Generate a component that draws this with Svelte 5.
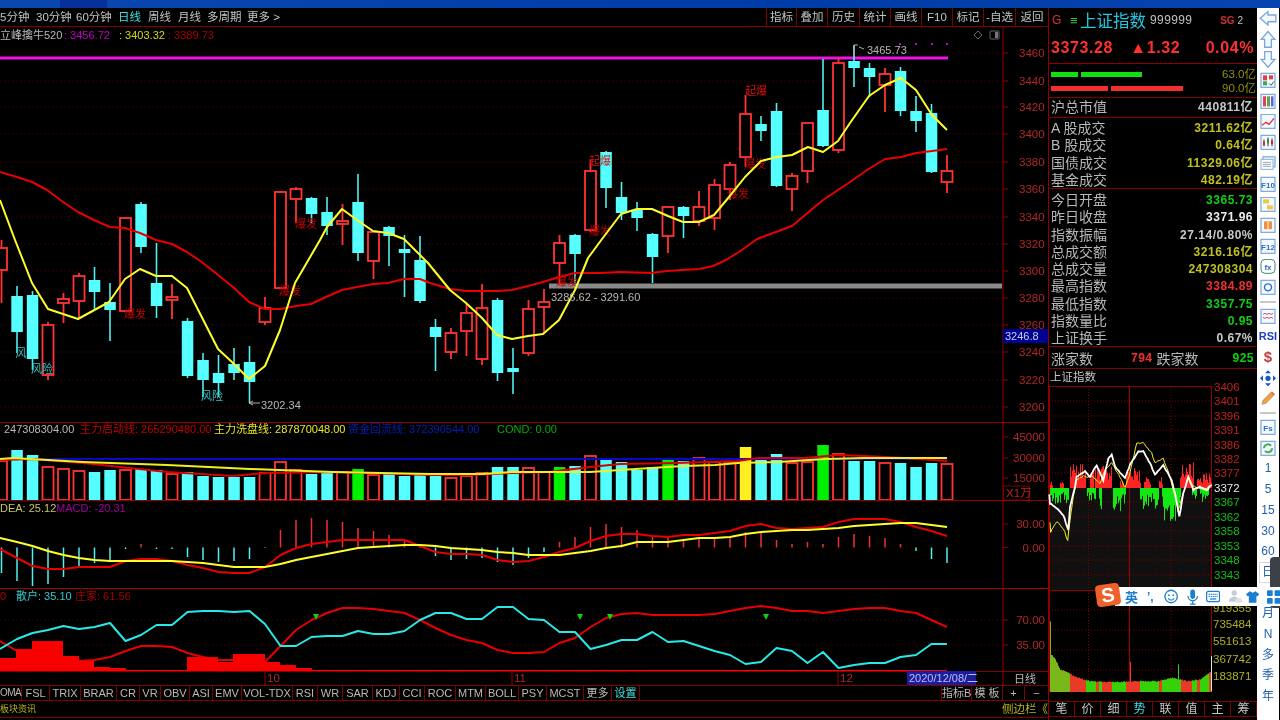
<script>
  // candles: [type, high, body top, body bottom, low] in page px, left to right
  const candles = [
    ['r',240,248,270,303],['c',286,296,332,353],['c',291,295,359,370],['r',322,325,375,380],['r',293,299,303,323],
    ['r',273,276,301,318],['c',267,280,292,310],['c',283,302,310,341],['r',217,218,311,312],['c',202,204,247,253],
    ['c',243,283,306,318],['r',284,297,300,319],['c',318,321,376,378],['c',353,360,380,397],['c',355,373,383,397],
    ['c',348,364,373,380],['c',346,362,382,403],['r',297,308,322,325],['r',191,192,288,289],['r',187,189,199,223],
    ['c',197,198,214,223],['c',197,212,226,235],['r',204,221,224,245],['c',174,202,253,261],['r',231,232,261,279],
    ['c',226,227,236,266],['c',235,249,253,297],['c',236,260,301,303],['c',319,327,337,371],['r',328,333,352,359],
    ['r',303,313,331,356],['r',284,308,359,365],['c',298,300,373,381],['c',348,368,372,394],['r',300,309,353,356],
    ['r',289,302,307,333],['r',235,243,263,285],['c',234,235,254,283],['r',160,171,230,232],['c',151,152,188,208],
    ['c',182,197,213,220],['c',202,210,218,231],['c',233,234,257,283],['r',206,207,236,253],['c',206,207,216,238],
    ['r',191,207,221,226],['r',179,185,218,230],['r',162,165,189,200],['r',95,114,157,167],['c',116,124,131,141],
    ['c',103,111,186,187],['r',173,176,189,211],['r',123,123,171,183],['c',59,110,146,147],['r',57,63,150,153],
    ['c',45,61,68,87],['c',63,68,77,97],['r',68,74,85,112],['c',67,71,111,116],['c',96,111,121,132],
    ['c',104,113,172,173],['r',155,171,182,193]
  ];
  const cx = i => 1.5 + 15.5 * i;
  const pts = a => a.map(p => p.join(',')).join(' ');
  const line = a => pts(a.map((y, i) => [i === 0 ? 0 : cx(i), y]));

  const yellowK = [[0,200],[15,240],[32,283],[48,309],[78,319],[109,302],[125,279],[140,269],[156,276],[172,276],[187,288],[218,349],[233,363],[249,379],[265,366],[280,330],[295,283],[320,240],[327,227],[342,209],[357,220],[373,231],[388,233],[404,239],[428,263],[450,290],[466,303],[482,318],[497,335],[512,339],[528,336],[543,334],[559,320],[575,290],[588,258],[602,239],[621,214],[637,209],[652,209],[668,216],[683,222],[699,222],[714,215],[729,197],[745,177],[761,161],[777,157],[792,155],[808,147],[823,152],[838,141],[850,123],[869,96],[885,85],[901,78],[916,90],[932,115],[947,130]];
  const redK = [[0,172],[17,177],[32,182],[47,190],[63,202],[78,212],[94,220],[110,227],[125,228],[140,233],[156,240],[172,244],[187,252],[203,263],[218,275],[233,287],[249,302],[265,309],[280,309],[296,306],[311,304],[326,297],[342,290],[357,287],[373,284],[388,283],[404,279],[420,279],[430,283],[450,289],[466,291],[497,291],[512,290],[528,286],[543,282],[559,277],[575,273],[601,273],[620,272],[651,273],[667,271],[699,269],[713,266],[726,260],[742,250],[757,239],[792,226],[823,200],[850,182],[867,170],[885,159],[901,157],[916,153],[932,151],[947,149]];

  const kTicks = [[3460,53],[3440,81],[3420,107],[3400,134],[3380,162],[3360,189],[3340,217],[3320,244],[3300,271],[3280,298],[3260,325],[3240,352],[3220,380],[3200,407]];
  const kTags = [
    ['爆发',306,224,'#c80000'],['爆发',135,314,'#c80000'],['爆发',290,291,'#c80000'],['爆发',600,231,'#c80000'],
    ['爆发',755,164,'#c80000'],['爆发',738,194,'#c80000'],['爆发',567,282,'#c80000'],['起爆',600,161,'#d81010'],
    ['起爆',756,91,'#d81010'],['风',21,353,'#30c8c8'],['风险',42,369,'#30c8c8'],['风险',212,396,'#30c8c8']
  ];

  // volume: fill type, top of bar. base is y=500
  const volTops = [461,450,455,467,469,471,472,470,470,469,470,474,472,476,477,477,477,473,462,470,474,473,472,469,475,473,476,475,476,478,476,473,467,467,468,472,467,466,456,460,462,470,467,459,461,458,462,462,447,458,454,463,462,445,454,461,461,463,463,467,463,464];
  const volTypes = 'rccrrrccrccrcccccrrrccrgrccccrrrccrrgcrccccgcrrryccrrgrccrcccr'.split('');
  const volY = [[0,459],[13,458],[83,462],[167,465],[250,469],[333,472],[430,474],[482,474],[512,472],[590,472],[651,468],[683,466],[715,465],[738,463],[778,462],[825,459],[865,458],[947,458]];
  const volR = [[0,460],[33,459],[83,463],[167,472],[233,476],[267,473],[333,472],[430,475],[469,475],[513,473],[549,472],[590,467],[620,464],[675,463],[707,462],[738,461],[758,458],[805,458],[838,455],[865,456],[904,458],[947,461]];

  // macd, one value per candle
  const macdBars = [573,581,586,584,577,568,563,560,549,544,549,549,557,560,562,561,559,548,530,520,518,520,522,528,531,535,539,548,556,560,559,558,562,565,558,552,542,537,527,524,527,530,537,536,539,537,537,537,532,533,540,544,542,544,537,534,536,538,544,551,559,563];
  const macdRed = [549,558,566,569,569,567,567,567,561,559,559,561,565,568,572,573,573,567,555,548,544,542,540,540,540,540,540,546,552,554,554,555,560,562,561,557,552,548,541,536,534,534,536,537,535,535,533,531,526,524,528,529,528,527,522,519,519,519,522,527,531,536];
  const macdYel = [538,542,546,551,555,558,560,561,561,561,561,561,562,563,565,567,567,567,564,560,557,554,551,548,547,546,545,545,546,548,549,550,552,553,555,555,555,553,551,548,546,542,542,542,540,538,538,537,534,532,531,530,530,529,528,526,525,524,523,523,525,527];

  // lower indicator
  const kdjCyan = [649,639,633,630,626,629,627,623,641,635,625,625,612,611,611,612,611,624,646,646,637,636,636,631,634,634,631,620,613,613,619,619,607,607,619,620,632,632,649,645,640,640,632,642,641,646,651,655,664,662,648,651,663,652,668,665,663,663,657,655,644,644];
  const kdjRed = [641,651,655,658,660,661,660,657,651,646,646,647,653,657,660,660,661,662,646,630,620,613,608,608,609,611,613,620,628,635,640,643,650,653,653,652,643,638,627,618,614,613,615,615,615,615,614,611,608,606,608,611,611,613,611,609,608,608,611,613,620,627];
  const kdjFill = [[0,658],[16,658],[16,649],[32,649],[32,641],[63,641],[63,656],[79,656],[79,661],[94,661],[94,667],[110,667],[110,668],[126,668],[126,670],[187,670],[187,657],[218,657],[218,662],[233,662],[233,654],[265,654],[265,662],[280,662],[280,665],[296,665],[296,668],[312,668],[312,670],[947,670],[947,671],[0,671]];
  const marks = [316,580,610,766];

  const tabsL = [['5分钟',36],['30分钟',40],['60分钟',42],['日线',30,'on'],['周线',30],['月线',29],['多周期',40],['更多 >',40]];
  const tabsR = [['指标',30],['叠加',31],['历史',32],['统计',31],['画线',31],['F10',31],['标记',31],['-自选',32],['返回',33]];
  const indicators = [['OMA',22],['FSL',28],['TRIX',31],['BRAR',36],['CR',23],['VR',21],['OBV',29],['ASI',23],['EMV',29],['VOL-TDX',51],['RSI',25],['WR',25],['SAR',30],['KDJ',27],['CCI',25],['ROC',31],['MTM',30],['BOLL',33],['PSY',28],['MCST',37],['更多',28],['设置',28,'on']];
  const sells = [['A 股成交','3211.62亿'],['B 股成交','0.64亿'],['国债成交','11329.06亿'],['基金成交','482.19亿']];
  const stats = [
    ['今日开盘','3365.73','green'],['昨日收盘','3371.96','white'],['指数振幅','27.14/0.80%','grey'],
    ['总成交额','3216.16亿','olive'],['总成交量','247308304','olive'],['最高指数','3384.89','red'],
    ['最低指数','3357.75','green'],['指数量比','0.95','green'],['上证换手','0.67%','grey']
  ];
  const quoteTabs = ['笔','价','细','势','联','值','主','筹'];

  // intraday mini chart, points read off the picture in 3x coordinates
  const mp = a => a.map(([x, y]) => [1040 + x / 3, 380 + y / 3]);
  const rnd = n => { const s = Math.sin(n * 12.9898) * 43758.5453; return s - Math.floor(s); };
  function wobble(a, amp) {
    const out = [];
    for (let k = 0; k < a.length - 1; k++) {
      const [x0, y0] = a[k], [x1, y1] = a[k + 1];
      const n = Math.max(1, Math.round((x1 - x0) / 1.3));
      for (let j = 0; j < n; j++) {
        const t = j / n;
        out.push([+(x0 + (x1 - x0) * t).toFixed(1), +(y0 + (y1 - y0) * t + (rnd(out.length) - 0.5) * amp).toFixed(1)]);
      }
    }
    out.push(a[a.length - 1]);
    return out;
  }
  const whiteLine = wobble(mp([[28,345],[30,370],[50,385],[70,405],[85,450],[90,380],[105,320],[110,290],[135,275],[150,290],[170,255],[190,300],[205,235],[215,225],[225,260],[255,295],[270,255],[295,215],[310,215],[330,250],[345,285],[370,255],[395,300],[405,340],[418,410],[430,340],[445,290],[460,330],[480,320],[500,330],[515,315]]), 1.2);
  const yellowLine = wobble(mp([[30,430],[32,455],[50,425],[70,445],[83,480],[90,420],[100,350],[110,300],[130,290],[160,290],[180,310],[195,270],[215,250],[240,290],[255,325],[270,280],[290,190],[310,190],[335,220],[345,250],[370,235],[390,290],[400,330],[415,390],[430,340],[445,290],[460,320],[480,325],[500,325],[515,315]]), 1.8);
  const inRange = (z, r) => r.some(([a, b]) => z >= a && z <= b);
  const greenZones = [[30,85],[140,165],[175,185],[218,255],[300,355],[365,420],[455,470],[480,505]];
  const redZones = [[30,36],[58,70],[88,135],[150,160],[165,215],[240,250],[258,300],[312,330],[355,368],[420,460],[470,515]];
  const greenDepth = z => z < 90 ? 16 : z < 170 ? 13 : z < 190 ? 27 : z < 260 ? 24 : z < 360 ? 21 : z < 425 ? 33 : 14;
  const redH = z => z < 85 ? 7 : z < 135 ? 25 : z < 215 ? 22 : z < 255 ? 8 : z < 300 ? 20 : z < 365 ? 11 : z < 420 ? 4 : z < 460 ? 26 : 15;
  const miniBars = [];
  const miniVols = [];
  const envelope = [[28,660],[33,825],[45,840],[60,870],[85,880],[100,890],[130,900],[150,905],[200,908],[300,905],[350,905],[400,895],[440,905],[480,900],[505,880],[515,878]];
  const volTop = z => {
    for (let k = 0; k < envelope.length - 1; k++) {
      const [a, b] = envelope[k], [c, d] = envelope[k + 1];
      if (z >= a && z <= c) return b + (d - b) * (z - a) / (c - a);
    }
    return 905;
  };
  for (let px = 1050; px < 1212; px++) {
    const z = (px - 1040) * 3;
    if (inRange(z, greenZones)) miniBars.push({ px, y: 488, h: greenDepth(z) * (0.25 + rnd(px) * 0.75), f: '#12e812' });
    if (inRange(z, redZones)) {
      const h = redH(z) * (0.3 + rnd(px + 9) * 0.7);
      miniBars.push({ px, y: 488 - h, h, f: '#ff2424' });
    }
    const spike = px === 1130 ? 20 : px === 1178 ? 15 : 0;
    const y = 380 + volTop(z) / 3 - spike - rnd(px + 3);
    const red = inRange(z, redZones) && !inRange(z, greenZones);
    miniVols.push({ px, y, h: 692 - y, f: z < 88 ? '#78b818' : red ? '#e83a28' : '#38d008' });
  }
  const miniHi = [[3406,387],[3401,401],[3396,416],[3391,430],[3386,445],[3382,459],[3377,473]];
  const miniLo = [[3367,502],[3362,517],[3358,531],[3353,546],[3348,560],[3343,575]];
  const miniVolLabels = [[919355,608],[735484,624],[551613,641],[367742,659],[183871,676]];
  const periods = ['1','5','15','30','60'];
  const periodsCn = ['周','月','N','多','季','年'];
</script>

<div class="screen">
  <div class="titlebar"><span class="title-dark"></span></div>
  <div class="body">
    <main class="charts">
      <div class="tabbar">
        <div class="tabs-left">
          {#each tabsL as t}<span class="tab-l" class:on={t[2]} style="width:{t[1]}px">{t[0]}</span>{/each}
        </div>
        <div class="tabs-right">
          {#each tabsR as t}<span class="tab-r" style="width:{t[1]}px">{t[0]}</span>{/each}
        </div>
      </div>

      <svg class="pane" width="1048" height="395" viewBox="0 27 1048 395">
        {#each kTicks as t}
          <line x1="0" x2="1003" y1={t[1]} y2={t[1]} class="grid" />
          <line x1="1003" x2="1008" y1={t[1]} y2={t[1]} class="tick" />
          <text x="1019" y={t[1] + 4} class="axis">{t[0]}</text>
        {/each}
        <line x1="1003" x2="1003" y1="27" y2="422" class="tick" />
        <text x="0" y="39" class="lg grey">立峰擒牛520</text>
        <text x="64" y="39" class="lg" fill="#c000c0">: 3456.72</text>
        <text x="119" y="39" class="lg" fill="#d8d800">: 3403.32</text>
        <text x="168" y="39" class="lg" fill="#a80000">: 3389.73</text>
        <path d="M978 31l4 4-4 4-4-4z" class="hollow" />
        <rect x="990" y="31" width="9" height="8" rx="1" class="hollow" />
        <rect x="995" y="32" width="3" height="6" fill="#777" />
        {#each [900,916,932,947] as x}<rect x={x - 1} y="43" width="2" height="2" fill="#d000d0" />{/each}

        <rect x="0" y="56.5" width="948" height="3" fill="#f010e8" />
        <rect x="549" y="283.5" width="453" height="5" fill="#8a8a8a" />

        {#each candles as c, i}
          {#if c[0] === 'c'}
            <line x1={cx(i)} x2={cx(i)} y1={c[1]} y2={c[4]} stroke="#50f0f0" stroke-width="1.6" />
            <rect x={cx(i) - 5.7} y={c[2]} width="11.5" height={c[3] - c[2]} fill="#55ffff" />
          {:else}
            <line x1={cx(i)} x2={cx(i)} y1={c[1]} y2={c[2]} stroke="#ff3434" stroke-width="1.8" />
            <line x1={cx(i)} x2={cx(i)} y1={c[3]} y2={c[4]} stroke="#ff3434" stroke-width="1.8" />
            <rect x={cx(i) - 5.5} y={c[2]} width="11" height={c[3] - c[2]} fill="#000" stroke="#ff3434" stroke-width="1.8" />
          {/if}
        {/each}

        {#each kTags as t}<text x={t[1]} y={t[2] + 4} class="tag" fill={t[3]}>{t[0]}</text>{/each}
        <polyline points={pts(redK)} class="ln" stroke="#e80000" />
        <polyline points={pts(yellowK)} class="ln" stroke="#ffff28" />

        <path d="M854 45v12M854 45h4M859 47l5 2" class="mark" />
        <text x="867" y="54" class="lg grey">3465.73</text>
        <path d="M249 403h11M249 403l4-2M249 403l4 2" class="mark" />
        <text x="261" y="409" class="lg grey">3202.34</text>
        <text x="551" y="301" class="lg grey">3286.62 - 3291.60</text>
        <rect x="1003" y="329" width="45" height="14" fill="#000090" />
        <text x="1005" y="340" class="lg" fill="#c8d0f0">3246.8</text>
      </svg>

      <svg class="pane" width="1048" height="78" viewBox="0 422 1048 78">
        <line x1="0" x2="1048" y1="422.5" y2="422.5" class="tick" />
        <text x="4" y="433" class="lg grey">247308304.00</text>
        <text x="80" y="433" class="lg" fill="#c00000">主力启动线: 265290480.00</text>
        <text x="214" y="433" class="lg" fill="#e8e820">主力洗盘线: 287870048.00</text>
        <text x="348" y="433" class="lg" fill="#0020b0">资金回流线: 372390544.00</text>
        <text x="497" y="433" class="lg" fill="#00b000">COND: 0.00</text>
        <line x1="1003" x2="1003" y1="422" y2="500" class="tick" />
        {#each [[45000,437],[30000,458],[15000,478]] as t}
          <line x1="1003" x2="1008" y1={t[1]} y2={t[1]} class="tick" />
          <text x="1013" y={t[1] + 4} class="axis">{t[0]}</text>
        {/each}
        <rect x="1003.5" y="486" width="26" height="14" class="unitbox" />
        <text x="1006" y="497" class="axis">X1万</text>
        {#each volTops as top, i}
          {#if volTypes[i] === 'r'}
            <rect x={cx(i) - 5.5} y={top} width="11" height={500 - top} fill="#000" stroke="#ff3434" stroke-width="1.8" />
          {:else}
            <rect x={cx(i) - 5.7} y={top} width="11.5" height={500 - top} fill={volTypes[i] === 'c' ? '#55ffff' : volTypes[i] === 'g' ? '#00f000' : '#ffee20'} />
          {/if}
        {/each}
        <line x1="0" x2="947" y1="459" y2="459" stroke="#0808c8" stroke-width="2" />
        <polyline points={pts(volR)} class="ln" stroke="#d80000" />
        <polyline points={pts(volY)} class="ln" stroke="#f0f020" />
      </svg>

      <svg class="pane" width="1048" height="88" viewBox="0 500 1048 88">
        <line x1="0" x2="1048" y1="500.5" y2="500.5" class="tick" />
        <text x="0" y="512" class="lg" fill="#c8c860">DEA: 25.12</text>
        <text x="56" y="512" class="lg" fill="#a000a0">MACD: -20.31</text>
        <line x1="1003" x2="1003" y1="500" y2="588" class="tick" />
        {#each [['30.00',524],['0.00',547.5]] as t}
          <line x1="1003" x2="1008" y1={t[1]} y2={t[1]} class="tick" />
          <text x="1045" y={t[1] + 4} class="axis end">{t[0]}</text>
        {/each}
        {#each macdBars as y, i}
          <line x1={cx(i)} x2={cx(i)} y1="547.5" y2={y} stroke={y > 547.5 ? '#50f0f0' : '#f03030'} stroke-width="1.5" />
        {/each}
        <polyline points={line(macdRed)} class="ln" stroke="#e80000" />
        <polyline points={line(macdYel)} class="ln" stroke="#ffff28" />
      </svg>

      <svg class="pane" width="1048" height="83" viewBox="0 588 1048 83">
        <line x1="0" x2="1048" y1="588.5" y2="588.5" stroke="#a00000" />
        <text x="0" y="600" class="lg" fill="#b80000">0</text>
        <text x="16" y="600" class="lg" fill="#30c8d0">散户: 35.10</text>
        <text x="75" y="600" class="lg" fill="#a00000">庄家: 61.56</text>
        <line x1="0" x2="1003" y1="620" y2="620" class="grid" />
        <line x1="0" x2="1003" y1="645" y2="645" class="grid" />
        <line x1="1003" x2="1003" y1="588" y2="671" class="tick" />
        {#each [['70.00',620],['35.00',645]] as t}
          <line x1="1003" x2="1008" y1={t[1]} y2={t[1]} class="tick" />
          <text x="1045" y={t[1] + 4} class="axis end">{t[0]}</text>
        {/each}
        <polyline points={line(kdjRed)} class="ln" stroke="#e80000" />
        <polygon points={pts(kdjFill)} fill="#f80000" />
        <polyline points={line(kdjCyan)} class="ln" stroke="#28e8e8" />
        {#each marks as x}<path d="M{x - 3} 614h6l-3 6z" fill="#10d010" />{/each}
      </svg>

      <svg class="pane" width="1048" height="14" viewBox="0 671 1048 14">
        <line x1="0" x2="1048" y1="671" y2="671" stroke="#b00000" stroke-width="1.5" />
        {#each [[265,'10'],[512,'11'],[838,'12']] as d}
          <line x1={d[0]} x2={d[0]} y1="671" y2="685" class="tick" />
          <text x={d[0] + 2} y="682" class="axis">{d[1]}</text>
        {/each}
        <rect x="907" y="671" width="69" height="14" fill="#1c1c9c" />
        <text x="909" y="682" class="lg" fill="#b8c0f8">2020/12/08/二</text>
        <line x1="1003" x2="1003" y1="671" y2="685" class="tick" />
        <text x="1014" y="683" class="cn11">日线</text>
      </svg>

      <div class="indbar">
        <div class="ind-left">
          {#each indicators as t}<span class="ind" class:on={t[2]} style="width:{t[1]}px">{t[0]}</span>{/each}
        </div>
        <div class="ind-right">
          <span class="ind" style="width:31px">指标B</span>
          <span class="ind" style="width:31px">模 板</span>
          <span class="ind" style="width:22px">+</span>
          <span class="ind last" style="width:23px">−</span>
        </div>
      </div>

      <div class="newsbar">
        <span class="news-first">板块资讯</span>
        <span>侧边栏《</span>
      </div>
    </main>

    <aside class="quote">
      <div class="q-head">
        <span class="q-g">G</span>
        <span class="q-menu">≡</span>
        <span class="q-name">上证指数</span>
        <span class="q-code">999999</span>
        <span class="q-sg"><b>SG</b> 2</span>
      </div>
      <div class="q-price">
        <span>3373.28</span><span class="q-chg">▲1.32</span><span>0.04%</span>
      </div>
      <div class="q-flow">
        <div class="flow-row">
          <i class="fb g" style="width:27px"></i><i class="fb g" style="width:61px"></i>
          <span class="flow-num">63.0亿</span>
        </div>
        <div class="flow-row">
          <i class="fb r" style="width:57px"></i><i class="fb r" style="width:72px"></i>
          <span class="flow-num">90.0亿</span>
        </div>
      </div>
      <div class="q-block cap"><div class="q-row"><span>沪总市值</span><b class="grey">440811亿</b></div></div>
      <div class="q-block">
        {#each sells as s}<div class="q-row"><span>{s[0]}</span><b class="olive">{s[1]}</b></div>{/each}
      </div>
      <div class="q-block stats">
        {#each stats as s}<div class="q-row"><span>{s[0]}</span><b class={s[2]}>{s[1]}</b></div>{/each}
      </div>
      <div class="q-updown">
        <span class="cn14">涨家数</span><b class="red up-n">794</b><span class="cn14">跌家数</span><b class="green dn-n">925</b>
      </div>
      <div class="q-mini-title">上证指数</div>
      <svg class="pane mini-pane" width="207" height="315" viewBox="1049 386 207 315">
        <rect x="1049" y="488" width="163" height="102" fill="#101010" />
        {#each [401,416,430,445,459,473,502,517,531,546,560,575] as y}
          <line x1="1049" x2="1212" y1={y} y2={y} class="minigrid" />
        {/each}
        {#each [610,630,650,670] as y}<line x1="1049" x2="1212" y1={y} y2={y} class="minigrid" />{/each}
        <line x1="1088.5" x2="1088.5" y1="386" y2="691" class="minigrid" />
        <line x1="1171" x2="1171" y1="386" y2="691" class="minigrid" />
        <line x1="1129.5" x2="1129.5" y1="386" y2="691" stroke="#a00000" />
        <rect x="1049.5" y="386.5" width="162" height="305" fill="none" stroke="#900000" />
        <line x1="1049" x2="1256" y1="590.5" y2="590.5" stroke="#900000" />
        {#each miniBars as b}<rect x={b.px} y={b.y} width="1" height={b.h} fill={b.f} />{/each}
        {#each miniVols as b}<rect x={b.px} y={b.y} width="1" height={b.h} fill={b.f} />{/each}
        <rect x="1211" y="656" width="1" height="35" fill="#e0e0e0" />
        <polyline points={pts(yellowLine)} fill="none" stroke="#f0f020" stroke-width="1" />
        <polyline points={pts(whiteLine)} fill="none" stroke="#ffffff" stroke-width="1.8" />
        {#each miniHi as t}<text x="1214" y={t[1] + 4} class="mini" fill="#c02020">{t[0]}</text>{/each}
        <text x="1214" y="492" class="mini" fill="#e8e8e8">3372</text>
        {#each miniLo as t}<text x="1214" y={t[1] + 4} class="mini" fill="#10c010">{t[0]}</text>{/each}
        {#each miniVolLabels as t}<text x="1213" y={t[1] + 4} class="mini" fill="#b0b020">{t[0]}</text>{/each}
      </svg>
      <div class="q-tabs">
        {#each quoteTabs as t, i}<span class:on={i === 3}>{t}</span>{/each}
      </div>
    </aside>

    <nav class="tools">
      <svg class="ic big" viewBox="0 0 16 16"><path d="M1 8l7-6v3h7v6H8v3z" class="o" /></svg>
      <svg class="ic big" viewBox="0 0 16 16"><path d="M8 1l6 7h-3v7H5V8H2z" class="o" /></svg>
      <svg class="ic big" viewBox="0 0 16 16"><path d="M8 15L2 8h3V1h6v7h3z" class="o" /></svg>
      <svg class="ic" viewBox="0 0 16 16"><rect x="1" y="1" width="14" height="14" class="o" /><rect x="3" y="3" width="4" height="5" fill="#e04040" /><rect x="9" y="3" width="4" height="4" fill="#e04040" /><rect x="3" y="9" width="4" height="4" fill="#30b050" /><path d="M9 11l2 2 3-4" fill="none" stroke="#555" /></svg>
      <svg class="ic" viewBox="0 0 16 16"><rect x="1" y="1" width="14" height="14" class="o" /><rect x="3" y="3" width="3" height="10" fill="#e04050" /><rect x="7" y="3" width="3" height="10" fill="#60a050" /><rect x="11" y="3" width="2.5" height="10" fill="#6060d0" /></svg>
      <svg class="ic" viewBox="0 0 16 16"><rect x="1" y="1" width="14" height="14" class="o" /><path d="M2 12l4-3 3 2 5-6" fill="none" stroke="#e03030" stroke-width="1.3" /></svg>
      <svg class="ic" viewBox="0 0 16 16"><rect x="1" y="1" width="14" height="14" class="o" /><path d="M4 5v7M8 3v9M12 4v8" stroke="#444" /><rect x="3" y="7" width="2" height="4" fill="#e02020" /><rect x="7" y="5" width="2" height="4" fill="#209030" /><rect x="11" y="6" width="2" height="4" fill="#e02020" /></svg>
      <svg class="ic" viewBox="0 0 16 16"><rect x="3" y="1.500" width="12" height="10" class="o" /><rect x="1" y="4" width="12" height="10" fill="#fff" stroke="#8ab0d8" /><path d="M3 7h8M3 9h8M3 11h8" stroke="#9ab" /></svg>
      <svg class="ic" viewBox="0 0 16 16"><rect x="1" y="1" width="14" height="14" class="o" /><text x="8" y="12" class="ict">F10</text></svg>
      <svg class="ic" viewBox="0 0 16 16"><rect x="1" y="1" width="14" height="14" class="o" /><rect x="3" y="3" width="6" height="4" fill="#f0c840" /><rect x="7" y="9" width="6" height="4" fill="#f0c840" /></svg>
      <svg class="ic" viewBox="0 0 16 16"><rect x="1" y="1" width="14" height="14" class="o" /><rect x="4" y="4" width="8" height="8" rx="1" fill="#f09040" /><path d="M8 4v8" stroke="#fff" /></svg>
      <svg class="ic" viewBox="0 0 16 16"><rect x="1" y="1" width="14" height="14" class="o" /><text x="8" y="12" class="ict">F12</text></svg>
      <svg class="ic" viewBox="0 0 16 16"><rect x="1" y="1" width="14" height="14" rx="4" fill="none" stroke="#408878" /><text x="8" y="12" class="ict">fx</text></svg>
      <svg class="ic" viewBox="0 0 16 16"><rect x="1" y="1" width="14" height="14" class="o" /><circle cx="8" cy="8" r="3.500" fill="none" stroke="#3070c0" stroke-width="1.4" /></svg>
      <i class="tool-sep"></i>
      <svg class="ic" viewBox="0 0 16 16"><rect x="1" y="1" width="14" height="14" class="o" /><path d="M3 6l2-1 2 1 2-1 2 1 2-1M3 9l2 1 2-1 2 1 2-1 2 1" fill="none" stroke="#d05070" /></svg>
      <span class="tool-rsi">RSI</span>
      <span class="tool-dollar">$</span>
      <svg class="ic" viewBox="0 0 16 16"><path d="M8 0l3 3H5zM8 16l-3-3h6zM0 8l3-3v6zM16 8l-3 3V5z" fill="#1058d0" /><circle cx="8" cy="8" r="2.600" fill="#1058d0" /></svg>
      <svg class="ic" viewBox="0 0 16 16"><path d="M2 14l1-4 8-8 3 3-8 8z" fill="#f0a040" stroke="#a08060" stroke-width=".6" /><path d="M11 2l3 3 1-1-3-3z" fill="#e06060" /></svg>
      <i class="tool-sep"></i>
      <svg class="ic" viewBox="0 0 16 16"><rect x="1" y="1" width="14" height="14" class="o" /><text x="8" y="12" class="ict">Fs</text></svg>
      <svg class="ic" viewBox="0 0 16 16"><rect x="1" y="1" width="14" height="14" class="o" /><path d="M4 8a4 4 0 0 1 7-2.600M12 8a4 4 0 0 1-7 2.600" fill="none" stroke="#40b050" stroke-width="2" /></svg>
      {#each periods as p}<span class="tool-num">{p}</span>{/each}
      <span class="tool-num boxed">日</span>
      {#each periodsCn as p}<span class="tool-num">{p}</span>{/each}
    </nav>
  </div>

  <div class="handle"></div>
  <div class="ime">
    <span class="ime-logo">S</span>
    <span class="ime-en">英</span>
    <span class="ime-dot">’,</span>
    <svg width="15" height="15" viewBox="0 0 16 16"><circle cx="8" cy="8" r="7" fill="none" stroke="#1a7fd0" stroke-width="1.5" /><circle cx="5.5" cy="6.500" r="1" fill="#1a7fd0" /><circle cx="10.5" cy="6.500" r="1" fill="#1a7fd0" /><path d="M4.500 10a4 4 0 0 0 7 0" fill="none" stroke="#1a7fd0" stroke-width="1.3" /></svg>
    <svg width="12" height="16" viewBox="0 0 12 16"><rect x="3.500" y="0" width="5" height="10" rx="2.500" fill="#1a7fd0" /><path d="M1 7a5 5 0 0 0 10 0M6 12v3M3 15.500h6" fill="none" stroke="#1a7fd0" stroke-width="1.3" /></svg>
    <svg width="15" height="13" viewBox="0 0 16 13"><rect x=".7" y=".7" width="14.600" height="11.600" rx="2" fill="none" stroke="#1a7fd0" stroke-width="1.4" /><path d="M3 4h10M3 6.500h10" stroke="#1a7fd0" stroke-dasharray="1.4 .8" stroke-width="1.4" /><path d="M4.500 9.300h7" stroke="#1a7fd0" stroke-width="1.4" /></svg>
    <svg width="15" height="15" viewBox="0 0 16 16"><circle cx="7" cy="4" r="3" fill="#c4ccd4" /><path d="M1 14a6 6 0 0 1 12 0z" fill="#c4ccd4" /><rect x="8" y="10" width="8" height="5" rx="2.500" fill="#dde2e6" /></svg>
    <svg class="ime-shirt" width="14" height="14" viewBox="0 0 14 14"><path d="M4 1l3 1.500L10 1l4 3-2 2.500-1-.8V13H3V5.700l-1 .8L0 4z" fill="#1a7fd0" /></svg>
    <svg class="ime-grid" width="14" height="14" viewBox="0 0 14 14"><rect width="6" height="6" rx="1" fill="#1a7fd0" /><rect x="8" width="6" height="6" rx="1" fill="#1a7fd0" /><rect y="8" width="6" height="6" rx="1" fill="#1a7fd0" /><rect x="8" y="8" width="6" height="6" rx="1" fill="#1a7fd0" /></svg>
  </div>
</div>

<style>
  :global(body) {
    margin: 0;
    background: #000;
  }
  .screen {
    position: relative;
    width: 1280px;
    height: 720px;
    overflow: hidden;
    background: #000;
    font-family: "Liberation Sans", "Noto Sans CJK SC", sans-serif;
    color: #c4c4c4;
    filter: blur(0.5px);
  }
  .titlebar {
    height: 8px;
    padding-left: 60px;
    background: linear-gradient(90deg, #0a48b0, #003ca8 60%, #0844b0);
  }
  .title-dark {
    display: block;
    width: 47px;
    height: 8px;
    background: #08309a;
  }
  .body {
    display: flex;
    height: 712px;
  }
  .charts {
    width: 1048px;
    border-right: 1px solid #900000;
    flex: none;
  }
  .pane {
    display: block;
  }
  .mini-pane {
    overflow: visible;
  }
  .tabbar {
    display: flex;
    justify-content: space-between;
    height: 18px;
    border-bottom: 1px solid #800000;
    font-size: 11.5px;
  }
  .tabs-left, .tabs-right, .ind-left, .ind-right {
    display: flex;
  }
  .tab-l {
    line-height: 18px;
    white-space: nowrap;
  }
  .tab-l.on, .ind.on {
    color: #40e0e0;
  }
  .tab-r {
    line-height: 18px;
    text-align: center;
    border-left: 1px solid #800000;
    box-sizing: border-box;
  }
  .grid {
    stroke: #2c0000;
    stroke-dasharray: 2 2;
  }
  .minigrid {
    stroke: #800000;
    stroke-dasharray: 1 2;
  }
  .tick {
    stroke: #900000;
  }
  .axis {
    font-size: 11.5px;
    fill: #b02828;
  }
  .end {
    text-anchor: end;
  }
  .lg {
    font-size: 11px;
  }
  .grey {
    fill: #b8b8b8;
    color: #d0d0d0;
  }
  .tag {
    font-size: 11px;
    text-anchor: middle;
  }
  .ln {
    fill: none;
    stroke-width: 2;
    stroke-linejoin: round;
  }
  .hollow {
    fill: none;
    stroke: #666;
  }
  .mark {
    fill: none;
    stroke: #b0b0b0;
  }
  .unitbox {
    fill: none;
    stroke: #800000;
  }
  .cn11 {
    font-size: 11px;
    fill: #b8b8b8;
  }
  .mini {
    font-size: 11.5px;
  }
  .indbar {
    display: flex;
    justify-content: space-between;
    box-sizing: border-box;
    height: 16px;
    border-top: 1px solid #800000;
    border-bottom: 1px solid #800000;
    font-size: 11px;
  }
  .ind {
    line-height: 14px;
    text-align: center;
    border-right: 1px solid #800000;
    box-sizing: border-box;
    white-space: nowrap;
    color: #b8b8b8;
  }
  .ind.on {
    color: #40e0e0;
  }
  .ind.last {
    border-right: 0;
  }
  .ind-left .ind:first-child {
    font-size: 10px;
    letter-spacing: -0.5px;
  }
  .ind-right .ind:first-child {
    border-left: 1px solid #800000;
  }
  .ind-left {
    width: 640px;
  }
  .newsbar {
    display: flex;
    justify-content: space-between;
    height: 16px;
    line-height: 16px;
    font-size: 11.5px;
    color: #b8b820;
    border-bottom: 1px solid #800000;
  }
  .news-first {
    font-size: 9px;
  }
  .quote {
    width: 208px;
    flex: none;
    box-sizing: border-box;
  }
  .q-head {
    display: flex;
    align-items: center;
    height: 24px;
    padding-left: 3px;
    position: relative;
  }
  .q-g {
    color: #e03030;
    font-size: 12px;
    width: 16px;
  }
  .q-menu {
    color: #40c040;
    font-size: 13px;
    width: 10px;
    margin-left: 2px;
  }
  .q-name {
    color: #20c8e0;
    font-size: 16.5px;
    width: 70px;
  }
  .q-code {
    font-size: 12px;
    letter-spacing: 0.4px;
    color: #c0c0c0;
  }
  .q-sg {
    position: absolute;
    right: 14px;
    font-size: 10px;
  }
  .q-sg b {
    color: #d03030;
  }
  .q-price {
    display: flex;
    justify-content: space-between;
    height: 32px;
    padding: 0 3px 0 2px;
    line-height: 32px;
    font-size: 16px;
    font-weight: 700;
    letter-spacing: 0.6px;
    color: #ff3030;
    border-bottom: 1px solid #900000;
    box-sizing: border-box;
  }
  .q-chg {
    margin-left: -8px;
  }
  .q-flow {
    height: 34px;
    padding-top: 3px;
    box-sizing: border-box;
    border-bottom: 1px solid #800000;
  }
  .flow-row {
    position: relative;
    display: flex;
    gap: 3px;
    height: 14px;
    align-items: center;
    padding-left: 2px;
  }
  .fb {
    display: block;
    height: 5px;
  }
  .fb.g {
    background: #10e010;
  }
  .fb.r {
    background: #f03030;
  }
  .flow-num {
    position: absolute;
    right: 1px;
    top: 0;
    line-height: 14px;
    font-size: 11.5px;
    color: #909010;
  }
  .q-block {
    padding: 2px 3px 0 2px;
    height: 71px;
    box-sizing: border-box;
    border-bottom: 1px solid #800000;
  }
  .q-block.cap {
    height: 20px;
    padding-top: 1px;
  }
  .q-block.stats {
    height: 158px;
    padding-top: 3px;
  }
  .q-row {
    display: flex;
    justify-content: space-between;
    height: 17.3px;
    line-height: 17.3px;
    font-size: 14px;
    padding-right: 1px;
  }
  .q-row span, .cn14 {
    color: #b8b8b8;
    font-size: 14px;
  }
  .q-row b, .q-updown b {
    font-size: 12px;
    font-weight: 700;
    letter-spacing: 0.5px;
  }
  b.green {
    color: #10d010;
  }
  b.white {
    color: #ececec;
  }
  b.grey {
    color: #c8c8c8;
  }
  b.olive {
    color: #c0c020;
  }
  b.red {
    color: #f03030;
  }
  .q-updown {
    display: flex;
    align-items: center;
    height: 22px;
    padding: 0 3px 0 2px;
    border-bottom: 1px solid #800000;
    box-sizing: border-box;
  }
  .up-n {
    margin-left: 38px;
    margin-right: 4px;
  }
  .dn-n {
    margin-left: auto;
  }
  .q-mini-title {
    height: 17px;
    line-height: 17px;
    font-size: 11.5px;
    padding-left: 1px;
  }
  .q-tabs {
    display: flex;
    height: 16px;
    border-top: 1px solid #800000;
    border-bottom: 1px solid #800000;
    box-sizing: border-box;
  }
  .q-tabs span {
    width: 26px;
    line-height: 14px;
    font-size: 12px;
    text-align: center;
    border-right: 1px solid #800000;
    box-sizing: border-box;
  }
  .q-tabs .on {
    color: #40e0e0;
  }
  .tools {
    width: 22px;
    flex: none;
    background: #fff;
    margin-right: 2px;
    display: flex;
    flex-direction: column;
    align-items: center;
  }
  .ic {
    display: block;
    width: 16px;
    height: 16px;
    padding: 2.35px 0;
    flex: none;
  }
  .ic.big {
    width: 18px;
    height: 18px;
    padding: 1.35px 0;
  }
  .o {
    fill: #f4f8ff;
    stroke: #7aa8dc;
    stroke-width: 1.2;
  }
  .ict {
    font-size: 8px;
    font-weight: 700;
    text-anchor: middle;
    fill: #2a70c0;
  }
  .tool-sep {
    display: block;
    width: 16px;
    height: 2px;
    margin: 3px 0;
    background: #c8c8c8;
    flex: none;
  }
  .tool-rsi, .tool-dollar, .tool-num {
    display: block;
    height: 20.7px;
    line-height: 20.7px;
    flex: none;
    font-size: 12px;
    color: #1f5fb0;
  }
  .tool-rsi {
    font-size: 11px;
    font-weight: 700;
    color: #2040c0;
  }
  .tool-dollar {
    font-size: 15px;
    font-weight: 700;
    color: #c04040;
  }
  .tool-num.boxed {
    width: 19px;
    text-align: center;
    box-shadow: inset 0 0 0 1px #d8d8d8;
  }
  .handle {
    position: absolute;
    left: 1270px;
    top: 557px;
    width: 10px;
    height: 51px;
    border-radius: 4px 0 0 4px;
    background: #3c4048;
  }
  .ime {
    position: absolute;
    left: 1096px;
    top: 587px;
    width: 184px;
    height: 19px;
    display: flex;
    align-items: center;
    gap: 8px;
    padding-left: 29px;
    box-sizing: border-box;
    background: linear-gradient(90deg, transparent 19px, #fff 19px);
  }
  .ime-logo {
    position: absolute;
    left: 0;
    top: -3px;
    width: 24px;
    height: 22px;
    border-radius: 4px;
    background: #f0602a;
    color: #fff;
    font-size: 20px;
    font-weight: 700;
    line-height: 22px;
    text-align: center;
    transform: rotate(-8deg);
  }
  .ime-en {
    color: #1a7fd0;
    font-size: 13px;
    font-weight: 700;
    margin-right: 1px;
  }
  .ime-dot {
    color: #1a7fd0;
    font-size: 12px;
    font-weight: 700;
    width: 10px;
  }
  .ime-shirt {
    margin-left: -4px;
  }
  .ime-grid {
    margin-left: -1px;
  }
</style>
